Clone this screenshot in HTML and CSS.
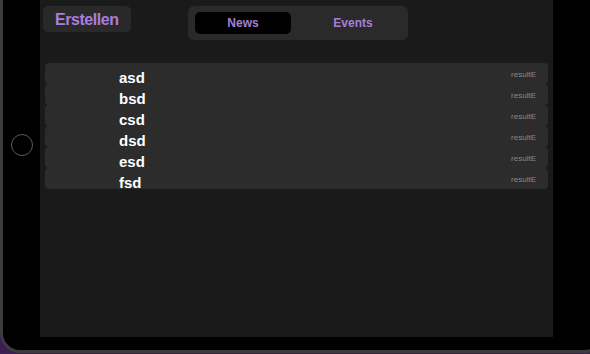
FILE: index.html
```html
<!DOCTYPE html>
<html lang="de">
<head>
    <meta charset="UTF-8">
    <meta name="viewport" content="width=device-width, initial-scale=1.0">
    <title>News</title>
    <link rel="stylesheet" href="styles.css">
</head>
<body>
    <div class="device">
        <div class="bezel-left">
            <div class="home-button"></div>
        </div>
        <div class="screen">
            <div class="top-bar">
                <button class="create-btn">Erstellen</button>
                <div class="segmented">
                    <div class="segment active">News</div>
                    <div class="segment">Events</div>
                </div>
            </div>
            <div class="list">
                <div class="row"><span class="name">asd</span><span class="result">resultE</span></div>
                <div class="row"><span class="name">bsd</span><span class="result">resultE</span></div>
                <div class="row"><span class="name">csd</span><span class="result">resultE</span></div>
                <div class="row"><span class="name">dsd</span><span class="result">resultE</span></div>
                <div class="row"><span class="name">esd</span><span class="result">resultE</span></div>
                <div class="row"><span class="name">fsd</span><span class="result">resultE</span></div>
            </div>
        </div>
    </div>
</body>
</html>
```

FILE: styles.css
```css
html, body {
    margin: 0;
    padding: 0;
}
body {
    width: 590px;
    height: 354px;
    overflow: hidden;
    background-color: #3a1f52;
    font-family: "Liberation Sans", Arial, sans-serif;
}
.device {
    display: flex;
    width: 604px;
    height: 373px;
    margin-top: -20px;
    padding: 17px 0 12px 37px;
    box-sizing: border-box;
    position: relative;
    background-color: #000;
    border: 3px solid #3c3c3c;
    border-radius: 20px;
}
.bezel-left {
    position: absolute;
    left: 0;
    top: 17px;
    width: 37px;
    display: flex;
    justify-content: center;
}
.home-button {
    margin-top: 134px;
    width: 20px;
    height: 20px;
    border: 1px solid #5a5a5a;
    border-radius: 50%;
}
.screen {
    width: 513px;
    height: 337px;
    background-color: #1b1a1b;
    flex-shrink: 0;
}
.top-bar {
    display: grid;
    grid-template-columns: 1fr auto 1fr;
    align-items: start;
    padding: 6px 0 0 3px;
}
.create-btn {
    justify-self: start;
    height: 26px;
    padding: 1px 12px 0;
    border: none;
    border-radius: 5px;
    background-color: #2a292a;
    color: #a97edc;
    font-family: "Liberation Sans", Arial, sans-serif;
    font-size: 16px;
    font-weight: bold;
    letter-spacing: -0.45px;
}
.segmented {
    display: grid;
    grid-template-columns: 96px 117px;
    width: 220px;
    height: 34px;
    padding: 6px 0 6px 7px;
    box-sizing: border-box;
    background-color: #2a2a2a;
    border-radius: 6px;
}
.segment {
    display: flex;
    align-items: center;
    justify-content: center;
    color: #a57fd6;
    font-size: 12px;
    font-weight: bold;
}
.segment + .segment {
    padding-left: 7px;
}
.segment.active {
    background-color: #000;
    border-radius: 5px;
}
.list {
    display: flex;
    flex-direction: column;
    margin: 23px 5px 0 5px;
}
.row {
    display: flex;
    justify-content: space-between;
    align-items: flex-start;
    height: 21px;
    background-color: #2c2c2c;
    border-radius: 4px;
}
.name {
    padding: 8px 0 0 74px;
    font-size: 15px;
    line-height: 13px;
    font-weight: bold;
    color: #fff;
}
.result {
    padding: 7px 12px 0 0;
    font-size: 8px;
    line-height: 10px;
    color: #8a8a8a;
}
```
